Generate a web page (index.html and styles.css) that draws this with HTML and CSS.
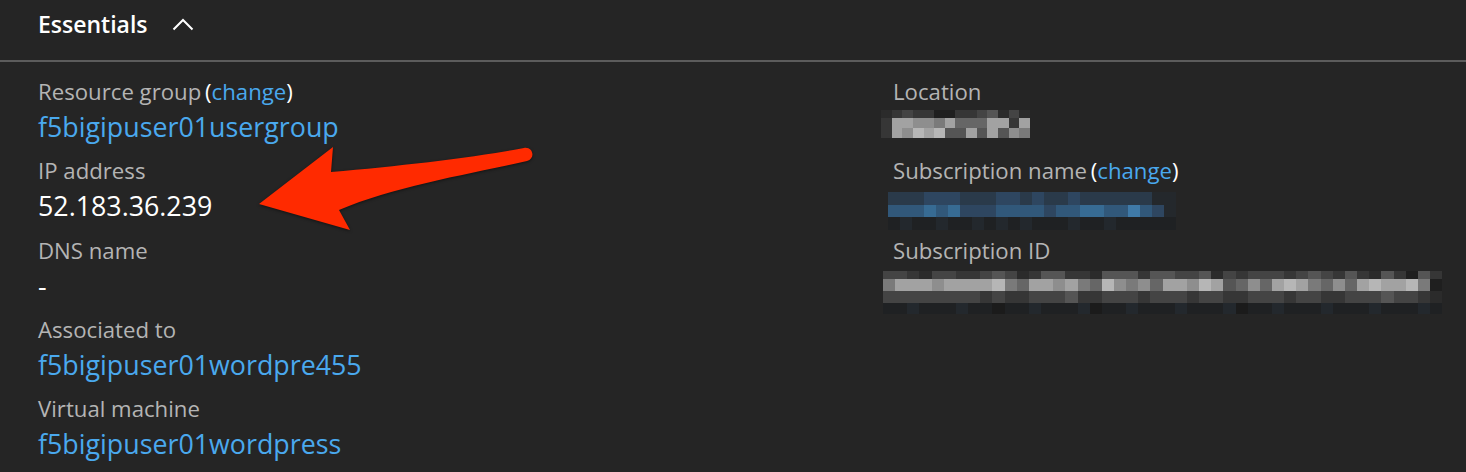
FILE: index.html
```html
<!DOCTYPE html>
<html lang="en">
<head>
<meta charset="utf-8">
<title>Essentials</title>
<link rel="stylesheet" href="styles.css">
</head>
<body>
<div class="page">
  <header class="head">
    <h1 class="title">Essentials</h1>
    <svg class="chev" width="22" height="14" viewBox="0 0 22 14"><polyline points="1.5,12.5 11,3 20.5,12.5" fill="none" stroke="#ffffff" stroke-width="2"/></svg>
  </header>
  <div class="grid">
    <div class="col">
      <div class="field">
        <div class="label">Resource group <span class="paren">(<a class="link">change</a>)</span></div>
        <div class="value"><a class="link">f5bigipuser01usergroup</a></div>
      </div>
      <div class="field">
        <div class="label">IP address</div>
        <div class="value">52.183.36.239</div>
      </div>
      <div class="field">
        <div class="label">DNS name</div>
        <div class="value">-</div>
      </div>
      <div class="field">
        <div class="label">Associated to</div>
        <div class="value"><a class="link">f5bigipuser01wordpre455</a></div>
      </div>
      <div class="field">
        <div class="label">Virtual machine</div>
        <div class="value"><a class="link">f5bigipuser01wordpress</a></div>
      </div>
    </div>
    <div class="col">
      <div class="field">
        <div class="label">Location</div>
        <div class="value">
          <div class="mosaic loc">
            <div class="mrow r8"><i class="g1"></i><i class="g2"></i><i class="g3"></i><i class="g2"></i><i class="g2"></i><i class="g0"></i><i class="g0"></i><i class="g2"></i><i class="g2"></i><i class="g3"></i><i class="g4"></i><i class="g1"></i><i class="g3"></i><i class="g1"></i></div>
            <div class="mrow r10"><i class="g2"></i><i class="g8"></i><i class="g8"></i><i class="g7"></i><i class="g7"></i><i class="g6"></i><i class="g8"></i><i class="g5"></i><i class="g5"></i><i class="g5"></i><i class="g8"></i><i class="g8"></i><i class="g2"></i><i class="g8"></i></div>
            <div class="mrow r10"><i class="g2"></i><i class="g8"></i><i class="g7"></i><i class="g9"></i><i class="g8"></i><i class="g9"></i><i class="g4"></i><i class="g4"></i><i class="g8"></i><i class="g4"></i><i class="g8"></i><i class="g4"></i><i class="g7"></i><i class="g6"></i></div>
          </div>
        </div>
      </div>
      <div class="field">
        <div class="label">Subscription name <span class="paren">(<a class="link">change</a>)</span></div>
        <div class="value">
          <div class="mosaic subname">
            <div class="mrow r13"><i class="b1"></i><i class="b1"></i><i class="b1"></i><i class="b2"></i><i class="b2"></i><i class="b2"></i><i class="b1"></i><i class="b1"></i><i class="b1"></i><i class="b2"></i><i class="b2"></i><i class="b1"></i><i class="b2"></i><i class="b1"></i><i class="b1"></i><i class="b2"></i><i class="b1"></i><i class="b1"></i><i class="b1"></i><i class="b1"></i><i class="b1"></i><i class="b1"></i><i class="b0"></i><i class="b0"></i></div>
            <div class="mrow r12"><i class="b3"></i><i class="b3"></i><i class="b3"></i><i class="b4"></i><i class="b3"></i><i class="b4"></i><i class="b2"></i><i class="b2"></i><i class="b2"></i><i class="b3"></i><i class="b3"></i><i class="b3"></i><i class="b3"></i><i class="b2"></i><i class="b3"></i><i class="b3"></i><i class="b4"></i><i class="b4"></i><i class="b3"></i><i class="b3"></i><i class="b5"></i><i class="b3"></i><i class="b2"></i><i class="b0"></i></div>
            <div class="mrow r13"><i class="d0"></i><i class="d1"></i><i class="d0"></i><i class="d0"></i><i class="d1"></i><i class="d0"></i><i class="d0"></i><i class="d1"></i><i class="d0"></i><i class="d1"></i><i class="d0"></i><i class="d1"></i><i class="d0"></i><i class="d0"></i><i class="d0"></i><i class="d1"></i><i class="d0"></i><i class="d0"></i><i class="d1"></i><i class="d0"></i><i class="d0"></i><i class="d0"></i><i class="d0"></i><i class="d0"></i></div>
          </div>
        </div>
      </div>
      <div class="field">
        <div class="label">Subscription ID</div>
        <div class="value">
          <div class="mosaic subid">
            <div class="mrow r8"><i class="g3"></i><i class="g3"></i><i class="g2"></i><i class="g1"></i><i class="g3"></i><i class="g3"></i><i class="g2"></i><i class="g2"></i><i class="g3"></i><i class="g4"></i><i class="g3"></i><i class="g1"></i><i class="g2"></i><i class="g4"></i><i class="g4"></i><i class="g2"></i><i class="g2"></i><i class="g1"></i><i class="g4"></i><i class="g4"></i><i class="g4"></i><i class="g2"></i><i class="g4"></i><i class="g4"></i><i class="g3"></i><i class="g3"></i><i class="g4"></i><i class="g1"></i><i class="g3"></i><i class="g2"></i><i class="g3"></i><i class="g3"></i><i class="g3"></i><i class="g2"></i><i class="g3"></i><i class="g4"></i><i class="g3"></i><i class="g2"></i><i class="g4"></i><i class="g2"></i><i class="g1"></i><i class="g4"></i><i class="g2"></i><i class="g0"></i><i class="g4"></i><i class="g2"></i></div>
            <div class="mrow r12"><i class="g6"></i><i class="g8"></i><i class="g8"></i><i class="g8"></i><i class="g7"></i><i class="g8"></i><i class="g8"></i><i class="g8"></i><i class="g8"></i><i class="g9"></i><i class="g6"></i><i class="g5"></i><i class="g8"></i><i class="g8"></i><i class="g7"></i><i class="g8"></i><i class="g6"></i><i class="g5"></i><i class="g9"></i><i class="g7"></i><i class="g6"></i><i class="g7"></i><i class="g5"></i><i class="g8"></i><i class="g8"></i><i class="g7"></i><i class="g9"></i><i class="g8"></i><i class="g4"></i><i class="g5"></i><i class="g7"></i><i class="g5"></i><i class="g8"></i><i class="g9"></i><i class="g8"></i><i class="g6"></i><i class="g5"></i><i class="g7"></i><i class="g5"></i><i class="g8"></i><i class="g9"></i><i class="g8"></i><i class="g8"></i><i class="g9"></i><i class="g6"></i><i class="g0"></i></div>
            <div class="mrow r12"><i class="g3"></i><i class="g3"></i><i class="g3"></i><i class="g3"></i><i class="g3"></i><i class="g3"></i><i class="g3"></i><i class="g3"></i><i class="g2"></i><i class="g3"></i><i class="g2"></i><i class="g2"></i><i class="g3"></i><i class="g3"></i><i class="g3"></i><i class="g4"></i><i class="g2"></i><i class="g2"></i><i class="g3"></i><i class="g3"></i><i class="g3"></i><i class="g2"></i><i class="g3"></i><i class="g3"></i><i class="g3"></i><i class="g2"></i><i class="g3"></i><i class="g3"></i><i class="g2"></i><i class="g2"></i><i class="g3"></i><i class="g3"></i><i class="g3"></i><i class="g2"></i><i class="g3"></i><i class="g3"></i><i class="g2"></i><i class="g2"></i><i class="g3"></i><i class="g3"></i><i class="g3"></i><i class="g4"></i><i class="g3"></i><i class="g3"></i><i class="g2"></i><i class="g1"></i></div>
            <div class="mrow r11"><i class="d0"></i><i class="d0"></i><i class="d1"></i><i class="d0"></i><i class="d0"></i><i class="d0"></i><i class="d1"></i><i class="d0"></i><i class="d0"></i><i class="d2"></i><i class="d0"></i><i class="d0"></i><i class="d1"></i><i class="d0"></i><i class="d0"></i><i class="d0"></i><i class="d1"></i><i class="d2"></i><i class="d0"></i><i class="d0"></i><i class="d1"></i><i class="d0"></i><i class="d0"></i><i class="d0"></i><i class="d1"></i><i class="d0"></i><i class="d0"></i><i class="d0"></i><i class="d1"></i><i class="d2"></i><i class="d0"></i><i class="d0"></i><i class="d1"></i><i class="d0"></i><i class="d0"></i><i class="d0"></i><i class="d1"></i><i class="d0"></i><i class="d0"></i><i class="d0"></i><i class="d1"></i><i class="d0"></i><i class="d0"></i><i class="d0"></i><i class="d1"></i><i class="d0"></i></div>
          </div>
        </div>
      </div>
    </div>
  </div>
  <svg class="arrow" width="1466" height="472" viewBox="0 0 1466 472">
    <path d="M259,204 L333,147 L331,172 C400,166 470,158 524,148 C533,146.5 536,158.5 527,161 C470,174 395,186 339,210 L350,230 Z" fill="#ff2a00"/>
  </svg>
</div>
</body>
</html>
```

FILE: styles.css
```css
html, body {
  margin: 0;
  padding: 0;
  background: #252525;
}
body {
  width: 1466px;
  height: 472px;
  overflow: hidden;
  font-family: "Open Sans", "Noto Sans", sans-serif;
  color: #ffffff;
}
.page {
  position: relative;
  width: 1466px;
  height: 472px;
}
.head {
  height: 62px;
  display: flex;
  align-items: center;
  gap: 24px;
  padding: 0 0 12px 38px;
  box-sizing: border-box;
  border-bottom: 2px solid #5c5c5c;
}
.title {
  margin: 0;
  font-size: 23px;
  font-weight: 600;
  color: #ffffff;
  line-height: 30px;
}
.chev {
  display: block;
}
.grid {
  display: grid;
  grid-template-columns: 855px 1fr;
  padding: 14px 0 0 38px;
}
.col {
  display: flex;
  flex-direction: column;
  gap: 9.3px;
}
.field {
  display: flex;
  flex-direction: column;
}
.label {
  font-size: 22.2px;
  line-height: 32px;
  height: 32px;
  color: #b4b4b4;
  white-space: nowrap;
}
.paren {
  color: #ffffff;
  margin-left: -2px;
}
.value {
  font-size: 26.8px;
  line-height: 38px;
  height: 38px;
  color: #ffffff;
  white-space: nowrap;
}
.link {
  color: #4aa9ee;
  text-decoration: none;
}
.mosaic {
  display: flex;
  flex-direction: column;
}
.mrow {
  display: flex;
}
.mrow i {
  flex: 1;
  display: block;
}
.r8 { height: 8px; }
.r10 { height: 10px; }
.r11 { height: 11px; }
.r12 { height: 12px; }
.r13 { height: 13px; }
.loc {
  width: 149px;
  margin: 2px 0 0 -12px;
}
.subname {
  width: 288px;
  margin: 5px 0 0 -5px;
}
.subid {
  width: 559px;
  margin: 4px 0 0 -10px;
}
.g0 { background: #1f1f1f; }
.g1 { background: #2b2b2b; }
.g2 { background: #363636; }
.g3 { background: #444444; }
.g4 { background: #555555; }
.g5 { background: #666666; }
.g6 { background: #7a7a7a; }
.g7 { background: #8e8e8e; }
.g8 { background: #a2a2a2; }
.g9 { background: #b6b6b6; }
.b0 { background: #24282c; }
.b1 { background: #2a3a4a; }
.b2 { background: #2e4660; }
.b3 { background: #31587a; }
.b4 { background: #376b93; }
.b5 { background: #3f7aa8; }
.d0 { background: #1f2123; }
.d1 { background: #23282d; }
.d2 { background: #1b1b1b; }
.arrow {
  position: absolute;
  left: 0;
  top: 0;
  pointer-events: none;
  filter: drop-shadow(0 1px 1.5px rgba(0, 0, 0, 0.5));
}
```
